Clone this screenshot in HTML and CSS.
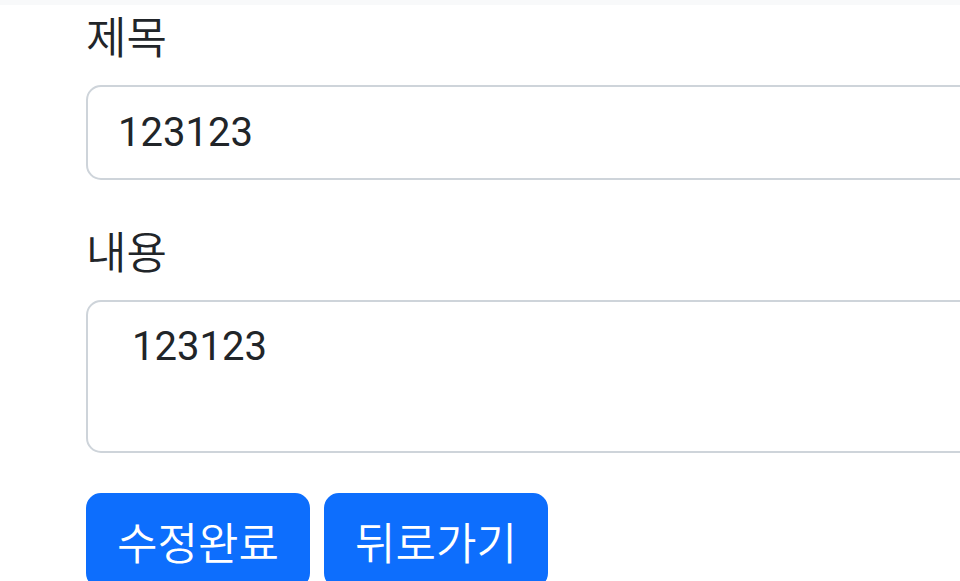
FILE: index.html
```html
<!DOCTYPE html>
<html lang="ko">
<head>
  <meta charset="UTF-8">
  <meta name="viewport" content="width=device-width, initial-scale=1.0">
  <title>게시글 수정</title>
  <link rel="stylesheet" href="styles.css">
</head>
<body>
  <div class="top-bar"></div>
  <form class="edit-form">
    <div class="field">
      <label for="title" class="form-label">제목</label>
      <input type="text" id="title" class="form-control" value="123123">
    </div>
    <div class="field">
      <label for="content" class="form-label">내용</label>
      <textarea id="content" class="form-control form-area">123123</textarea>
    </div>
    <div class="actions">
      <button type="submit" class="btn">수정완료</button>
      <button type="button" class="btn">뒤로가기</button>
    </div>
  </form>
</body>
</html>
```

FILE: styles.css
```css
* {
  margin: 0;
  padding: 0;
  box-sizing: border-box;
}

body {
  font-family: Roboto, 'Noto Sans CJK KR', sans-serif;
  font-size: 40px;
  line-height: 1.5;
  color: #212529;
  background: #fff;
  overflow: hidden;
}

.top-bar {
  height: 5px;
  background: #f8f9fa;
}

.edit-form {
  width: 1300px;
  padding-left: 86px;
}

.field {
  margin-bottom: 40px;
}

.form-label,
.btn {
  font-family: 'Noto Sans CJK KR', sans-serif;
  font-size: 44px;
  font-weight: 350;
  line-height: 60px;
}

.form-label {
  display: inline-block;
  margin-bottom: 20px;
}

.form-control {
  display: block;
  width: 100%;
  height: 95px;
  padding: 15px 30px;
  font: inherit;
  color: #212529;
  background: #fff;
  border: 2px solid #ced4da;
  border-radius: 15px;
  outline: none;
}

.form-area {
  height: 153px;
  padding-left: 44px;
  resize: none;
}

.actions {
  display: flex;
  gap: 14px;
}

.btn {
  width: 224px;
  height: 95px;
  padding: 15px 0;
  color: #fff;
  background: #0d6efd;
  border: 2px solid #0d6efd;
  border-radius: 15px;
  cursor: pointer;
}
```
